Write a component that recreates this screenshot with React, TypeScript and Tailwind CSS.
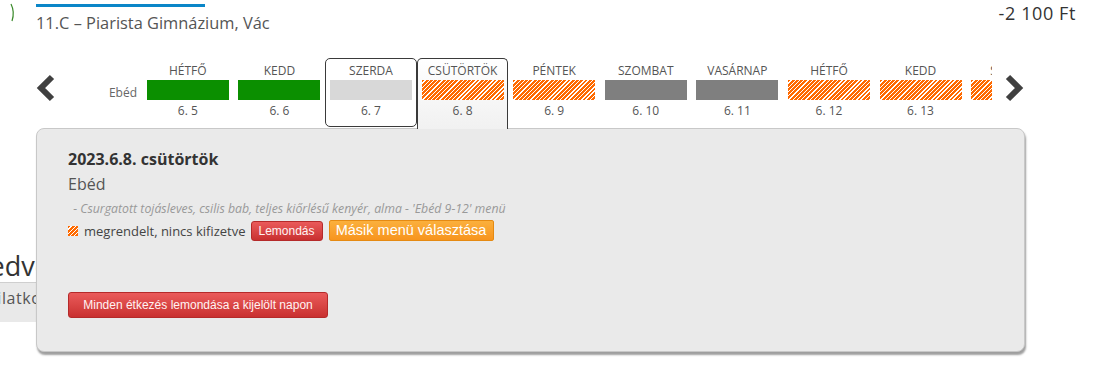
import React from "react";

type DayState = "green" | "light" | "dark" | "hatch";

interface Day {
  name: string;
  date: string;
  state: DayState;
  mark?: "hover" | "selected";
}

const days: Day[] = [
  { name: "HÉTFŐ", date: "6. 5", state: "green" },
  { name: "KEDD", date: "6. 6", state: "green" },
  { name: "SZERDA", date: "6. 7", state: "light", mark: "hover" },
  { name: "CSÜTÖRTÖK", date: "6. 8", state: "hatch", mark: "selected" },
  { name: "PÉNTEK", date: "6. 9", state: "hatch" },
  { name: "SZOMBAT", date: "6. 10", state: "dark" },
  { name: "VASÁRNAP", date: "6. 11", state: "dark" },
  { name: "HÉTFŐ", date: "6. 12", state: "hatch" },
  { name: "KEDD", date: "6. 13", state: "hatch" },
  { name: "SZERDA", date: "6. 14", state: "hatch" },
];

const barClass: Record<DayState, string> = {
  green: "bg-[#0b8f00]",
  light: "bg-[#d8d8d8]",
  dark: "bg-[#7f7f7f]",
  hatch: "bg-[repeating-linear-gradient(135deg,#ff6a00_0px,#ff6a00_2px,#ffffff_2px,#ffffff_3px)]",
};

function Chevron({ dir }: { dir: "left" | "right" }) {
  const pts = dir === "left" ? "17,3 6,14 17,25" : "3,3 14,14 3,25";
  return (
    <svg width="20" height="28" viewBox="0 0 20 28" className="shrink-0">
      <polyline points={pts} fill="none" stroke="#404040" strokeWidth="6" strokeLinejoin="miter" />
    </svg>
  );
}

function DayCell({ day }: { day: Day }) {
  let box = "h-[70px] border border-transparent";
  if (day.mark === "hover") box = "h-[69px] rounded-[5px] border border-[#3a3a3a] bg-white";
  if (day.mark === "selected")
    box = "h-[71px] rounded-t-[5px] border-x border-t border-[#3a3a3a] bg-gradient-to-b from-white to-[#f1f1f1]";
  return (
    <div className={`flex w-[91.6px] shrink-0 flex-col items-center pt-[5px] ${box}`}>
      <div className="text-[12px] leading-[14px] text-[#555] whitespace-nowrap">{day.name}</div>
      <div className={`mt-[2px] h-[20px] w-[82px] ${barClass[day.state]}`} />
      <div className="mt-[4px] text-[12px] leading-[14px] text-[#555]">{day.date}</div>
    </div>
  );
}

function RedButton({ children, className }: { children: React.ReactNode; className?: string }) {
  return (
    <button
      type="button"
      className={`rounded-[3px] border border-[#b52a2a] bg-gradient-to-b from-[#ea5a5a] to-[#c93030] text-[#fff3f3] font-['Liberation_Sans',Arial,sans-serif] ${className ?? ""}`}
    >
      {children}
    </button>
  );
}

export default function App() {
  return (
    <div className="relative h-[370px] w-[1097px] overflow-hidden bg-white font-['Open_Sans',sans-serif]">
      {/* header */}
      <div className="flex h-[58px] justify-between">
        <div className="relative pl-[36px]">
          <svg width="8" height="20" viewBox="0 0 8 20" className="absolute left-[9px] top-[3px]">
            <path d="M2 1 Q6 9 3 18" fill="none" stroke="#3a8a2a" strokeWidth="1.2" />
          </svg>
          <a className="-mt-[17px] block w-[169px] overflow-hidden whitespace-nowrap border-b-[3px] border-[#0a86c8] pb-[5px] text-[24px] leading-[16px] text-[#0a86c8]">
            Szabó Dániel Márk
          </a>
          <div className="mt-[5px] text-[16.4px] leading-[22px] text-[#555]">11.C – Piarista Gimnázium, Vác</div>
        </div>
        <div className="pr-[21px] pt-[1px] text-[18px] leading-[24px] tracking-[0.6px] text-[#333]">-2 100 Ft</div>
      </div>

      {/* day strip */}
      <div className="relative z-10 flex h-[71px] items-start pl-[35px]">
        <div className="mt-[16px]">
          <Chevron dir="left" />
        </div>
        <div className="w-[87px] shrink-0 pr-[5px] pt-[28px] text-right text-[12px] leading-[14px] text-[#666]">
          Ebéd
        </div>
        <div className="flex h-[71px] w-[850px] shrink-0 overflow-hidden">
          {days.map((d, i) => (
            <DayCell key={i} day={d} />
          ))}
        </div>
        <div className="ml-[13px] mt-[16px]">
          <Chevron dir="right" />
        </div>
      </div>

      {/* page content under the popover */}
      <div className="mt-[122px]">
        <div className="-ml-[27px] text-[27px] leading-[30px] text-[#333] whitespace-nowrap">Kedvezmények</div>
        <div className="mt-[1px] h-[40px] w-[120px] border-t border-[#cfcfcf] bg-[#e9e9e9] pt-[4px] text-[16px] leading-[22px] tracking-[0.6px] text-[#555] whitespace-nowrap">
          <span className="-ml-[24px] inline-block">Nyilatkozatok</span>
        </div>
      </div>

      {/* day detail popover */}
      <div className="absolute left-[36px] top-[128px] h-[224px] w-[989px] rounded-[8px] border border-[#c8c8c8] bg-[#eaeaea] pl-[30px] pt-[20px] shadow-[1px_3px_2px_rgba(0,0,0,0.38)]">
        <div className="pl-[1px] text-[16px] font-bold leading-[20px] text-[#333]">2023.6.8. csütörtök</div>
        <div className="mt-[4px] pl-[1px] text-[16px] leading-[22px] text-[#555]">Ebéd</div>
        <div className="mt-[7px] pl-[3px] text-[12.3px] italic leading-[14px] text-[#999]">
          &nbsp;- Csurgatott tojásleves, csilis bab, teljes kiőrlésű kenyér, alma - 'Ebéd 9-12' menü
        </div>
        <div className="mt-[4px] flex h-[21px] items-center">
          <div className={`ml-[1px] h-[10px] w-[10px] ${barClass.hatch}`} />
          <span className="ml-[6px] text-[13px] leading-[16px] text-[#444]">megrendelt, nincs kifizetve</span>
          <RedButton className="ml-[5px] h-[20px] w-[72px] text-[12px] leading-[18px]">Lemondás</RedButton>
          <button
            type="button"
            className="ml-[6px] h-[21px] w-[165px] rounded-[2px] border border-[#e58a12] bg-gradient-to-b from-[#fbb03c] to-[#f7941d] font-['Liberation_Sans',Arial,sans-serif] text-[14.5px] leading-[19px] text-white"
          >
            Másik menü választása
          </button>
        </div>
        <RedButton className="ml-[1px] mt-[51px] block h-[26px] w-[260px] text-[12px] leading-[24px]">
          Minden étkezés lemondása a kijelölt napon
        </RedButton>
      </div>
    </div>
  );
}
